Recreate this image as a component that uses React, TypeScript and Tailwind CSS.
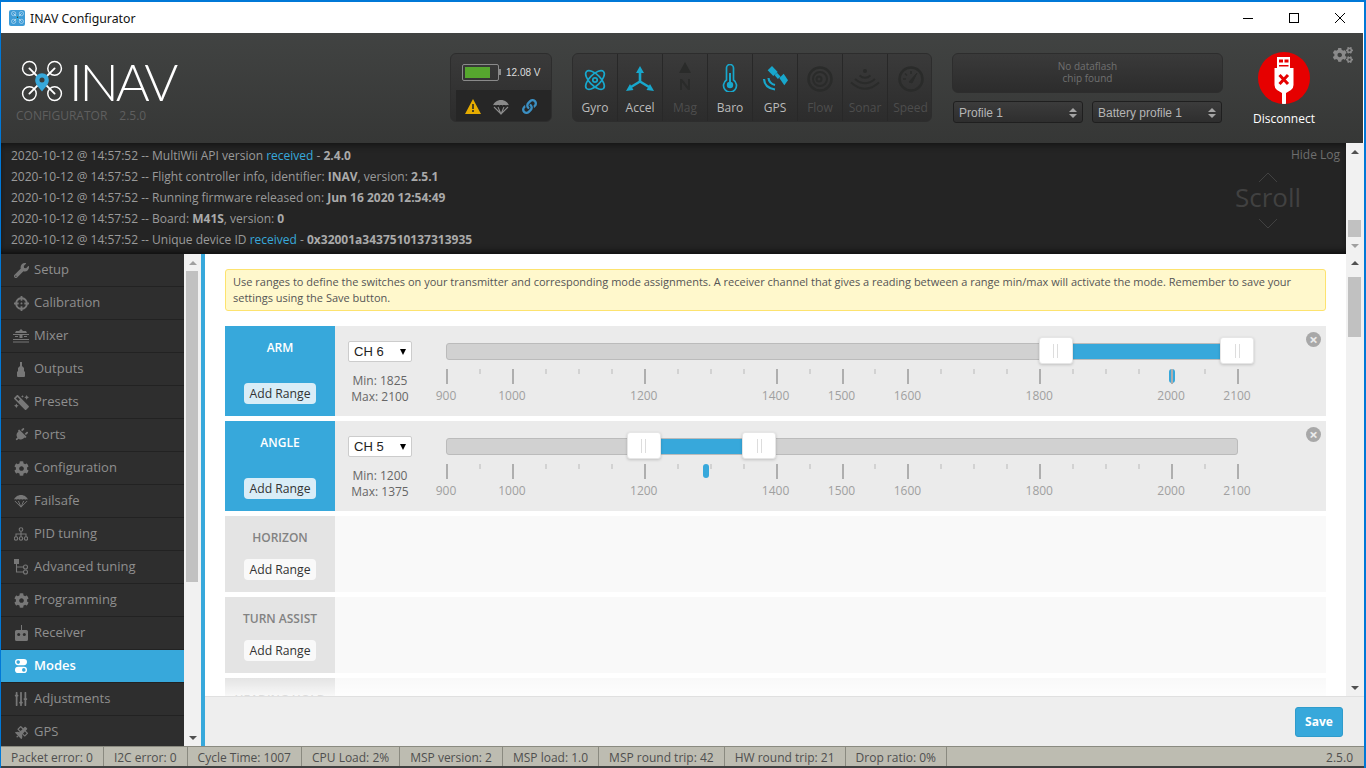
import {
  FaCog,
  FaCogs,
  FaCrosshairs,
  FaLink,
  FaMagic,
  FaPlug,
  FaSatellite,
  FaSlidersH,
  FaWrench,
} from "react-icons/fa";
import type { ReactNode } from "react";

const SCALE_BIG = [900, 1000, 1200, 1400, 1500, 1600, 1800, 2000, 2100];
const SCALE_SMALL = [950, 1050, 1100, 1150, 1250, 1300, 1350, 1450, 1550, 1650, 1700, 1750, 1850, 1900, 1950, 2050];
const pos = (v: number) => ((v - 900) / 1200) * 791;

function Drone({ size = 60 }: { size?: number }) {
  return (
    <svg width={size} height={size} viewBox="0 0 40 40" fill="none">
      <g stroke="#fff" strokeWidth="1.4">
        <circle cx="8" cy="8" r="6.5" />
        <circle cx="32" cy="8" r="6.5" />
        <circle cx="8" cy="32" r="6.5" />
        <circle cx="32" cy="32" r="6.5" />
        <path d="M8 8l10 10M32 8L22 18M8 32l10-10M32 32L22 22" strokeWidth="1.8" strokeLinecap="round" />
      </g>
      <path d="M20 30c-3-4-6.500-7-6.500-11a6.500 6.500 0 0 1 13 0c0 4-3.500 7-6.500 11z" fill="#37a8db" />
      <circle cx="20" cy="19" r="2.400" fill="#3c3d3c" />
    </svg>
  );
}

function GyroIcon() {
  return (
    <svg width="24" height="24" viewBox="0 0 24 24" fill="none" stroke="#18a7cc" strokeWidth="1.700">
      <ellipse cx="12" cy="12" rx="12" ry="5.500" transform="rotate(45 12 12)" />
      <ellipse cx="12" cy="12" rx="12" ry="5.500" transform="rotate(-45 12 12)" />
      <circle cx="12" cy="12" r="2.200" />
    </svg>
  );
}

function AccelIcon() {
  return (
    <svg width="28" height="26" viewBox="0 0 28 26" fill="#18a7cc">
      <path d="M14 0l4 7h-8zM0 25l4-7 3.500 6z" />
      <path d="M28 25l-4-7-3.500 6z" />
      <path d="M14 5v11M14 15.500L5 21M14 15.500L23 21" stroke="#18a7cc" strokeWidth="2.600" fill="none" />
    </svg>
  );
}

function MagIcon() {
  return (
    <svg width="14" height="30" viewBox="0 0 14 30" fill="#2a2b2a">
      <path d="M7 0l6 11H1z" />
      <path d="M2 28V17h2l6 7.500V17h2v11h-2l-6-7.500V28z" />
    </svg>
  );
}

function BaroIcon() {
  return (
    <svg width="16" height="28" viewBox="0 0 16 28" fill="none" stroke="#18a7cc" strokeWidth="1.700">
      <path d="M4.500 16V4a3.500 3.500 0 0 1 7 0v12a6.500 6.500 0 1 1-7 0z" />
      <circle cx="8" cy="21" r="3.200" fill="#18a7cc" stroke="none" />
      <path d="M8 21V9" strokeWidth="2" />
    </svg>
  );
}

function GpsIcon() {
  return (
    <svg width="26" height="26" viewBox="0 0 26 26" fill="#18a7cc">
      <path d="M5.700 4.300L10 0l5.700 6-4.400 4z" />
      <path d="M12.500 9l2.500-2.300 3.500 3.800-2.600 2.500z" />
      <path d="M17.300 12l4.400-4.300 4.300 6.600-3.700 5z" />
      <path d="M6.500 12q.5 5.500 6.500 7M2 13q.5 9 11 10.500" fill="none" stroke="#18a7cc" strokeWidth="2.200" />
    </svg>
  );
}

function FlowIcon() {
  return (
    <svg width="26" height="26" viewBox="0 0 26 26" fill="none" stroke="#2a2b2a">
      <circle cx="13" cy="13" r="11.500" strokeWidth="2.500" />
      <circle cx="13" cy="13" r="7" strokeWidth="2" />
      <circle cx="12" cy="13" r="2.500" strokeWidth="2" />
    </svg>
  );
}

function SonarIcon() {
  return (
    <svg width="30" height="24" viewBox="0 0 30 24" fill="none" stroke="#2a2b2a" strokeWidth="2">
      <circle cx="15" cy="3" r="2" fill="#2a2b2a" stroke="none" />
      <path d="M9.500 7.500q5.500 4.500 11 0M5 11q10 8.500 20 0M1 14.500q14 12.500 28 0" />
    </svg>
  );
}

function SpeedIcon() {
  return (
    <svg width="26" height="26" viewBox="0 0 26 26" fill="none" stroke="#2a2b2a">
      <circle cx="13" cy="13" r="11.500" strokeWidth="2.500" />
      <path d="M11 16l8-9-5 10z" fill="#2a2b2a" strokeWidth="1" />
      <path d="M5 13h3M13 5v3M7 7.500l2 2" strokeWidth="1.500" />
    </svg>
  );
}

function ParachuteIcon({ color = "#8a8a8a", size = 16 }: { color?: string; size?: number }) {
  return (
    <svg width={size} height={size} viewBox="0 0 16 16" fill={color}>
      <path d="M8 1C4 1 .8 3.500 0 6.500c1-.6 2-.6 3 0 1-.6 2.500-.6 3.500 0 1-.6 2-.6 3 0 1-.6 2.500-.6 3.500 0 1-.6 2-.6 3 0C15.200 3.500 12 1 8 1z" />
      <path d="M1 8l7 7 7-7M5 8l3 7 3-7" fill="none" stroke={color} strokeWidth="1.100" />
    </svg>
  );
}

function MixerIcon() {
  return (
    <svg width="16" height="14" viewBox="0 0 16 14" fill="#777">
      <path d="M8 0l2 2h3l1 2H2l1-2h3zM0 5h16v1H0zM2 7h3v1H2zM11 7h3v1h-3zM6.500 6h3v3h-3z" />
      <path d="M0 10h16v1H0zM0 12.500h16v1H0z" />
    </svg>
  );
}

function OutputsIcon() {
  return (
    <svg width="10" height="15" viewBox="0 0 10 15" fill="#777">
      <path d="M4 0h2v4l2 2v3l1 1v4q0 1-1 1H2q-1 0-1-1v-4l1-1V6l2-2z" />
    </svg>
  );
}

function ReceiverIcon() {
  return (
    <svg width="13" height="16" viewBox="0 0 13 16" fill="#777">
      <path d="M6 0h1v5h4.500q1.500 0 1.500 1.500V14.500q0 1.500-1.500 1.500h-10Q0 16 0 14.500V6.500Q0 5 1.500 5H6z" />
      <circle cx="3.700" cy="9.500" r="1.500" fill="#2e2e2e" />
      <circle cx="9.300" cy="9.500" r="1.500" fill="#2e2e2e" />
    </svg>
  );
}

function ModesIcon() {
  return (
    <svg width="12" height="14" viewBox="0 0 12 14" fill="#fff">
      <rect width="12" height="6.200" rx="3.100" />
      <rect y="7.800" width="12" height="6.200" rx="3.100" />
      <circle cx="3.200" cy="3.100" r="1.800" fill="#37a8db" />
      <circle cx="8.800" cy="10.900" r="1.800" fill="#37a8db" />
    </svg>
  );
}

function PidIcon() {
  return (
    <svg width="14" height="14" viewBox="0 0 14 14" fill="none" stroke="#777" strokeWidth="1.100">
      <circle cx="7" cy="2.500" r="1.800" />
      <circle cx="2" cy="11.500" r="1.700" />
      <circle cx="7" cy="11.500" r="1.700" />
      <circle cx="12" cy="11.500" r="1.700" />
      <path d="M7 4.300v5.500M2 9.800V7h10v2.800" />
    </svg>
  );
}

function AdvancedIcon() {
  return (
    <svg width="15" height="16" viewBox="0 0 15 16" fill="none" stroke="#777" strokeWidth="1.100">
      <rect x="0" y="0" width="5" height="5" fill="#777" stroke="none" />
      <path d="M2.500 5v8h7M2.500 8h7" />
      <circle cx="11.500" cy="8" r="2" />
      <circle cx="11.500" cy="13" r="2" />
    </svg>
  );
}

const NAV: { label: string; icon: ReactNode }[] = [
  { label: "Setup", icon: <FaWrench size={15} /> },
  { label: "Calibration", icon: <FaCrosshairs size={15} /> },
  { label: "Mixer", icon: <MixerIcon /> },
  { label: "Outputs", icon: <OutputsIcon /> },
  { label: "Presets", icon: <FaMagic size={15} className="-scale-x-100" /> },
  { label: "Ports", icon: <FaPlug size={14} className="rotate-45" /> },
  { label: "Configuration", icon: <FaCog size={15} /> },
  { label: "Failsafe", icon: <ParachuteIcon color="#777" size={14} /> },
  { label: "PID tuning", icon: <PidIcon /> },
  { label: "Advanced tuning", icon: <AdvancedIcon /> },
  { label: "Programming", icon: <FaCog size={15} /> },
  { label: "Receiver", icon: <ReceiverIcon /> },
  { label: "Modes", icon: <ModesIcon /> },
  { label: "Adjustments", icon: <FaSlidersH size={14} className="rotate-90" /> },
  { label: "GPS", icon: <FaSatellite size={13} /> },
];

const SENSORS: { label: string; icon: ReactNode; on: boolean }[] = [
  { label: "Gyro", icon: <GyroIcon />, on: true },
  { label: "Accel", icon: <AccelIcon />, on: true },
  { label: "Mag", icon: <MagIcon />, on: false },
  { label: "Baro", icon: <BaroIcon />, on: true },
  { label: "GPS", icon: <GpsIcon />, on: true },
  { label: "Flow", icon: <FlowIcon />, on: false },
  { label: "Sonar", icon: <SonarIcon />, on: false },
  { label: "Speed", icon: <SpeedIcon />, on: false },
];

const STATUS = [
  "Packet error: 0",
  "I2C error: 0",
  "Cycle Time: 1007",
  "CPU Load: 2%",
  "MSP version: 2",
  "MSP load: 1.0",
  "MSP round trip: 42",
  "HW round trip: 21",
  "Drop ratio: 0%",
];

function Handle({ value }: { value: number }) {
  return (
    <div
      className="absolute top-[-7px] ml-[-18px] flex h-[27px] w-[34px] items-center justify-center gap-[3px] rounded-[3px] border border-[#e6e6e6] bg-white shadow-[0_1px_3px_rgba(0,0,0,0.18)]"
      style={{ left: pos(value) }}
    >
      <span className="h-[14px] w-px bg-[#ddd]" />
      <span className="h-[14px] w-px bg-[#ddd]" />
    </div>
  );
}

function RangeRow({
  name,
  channel,
  min,
  max,
  marker,
}: {
  name: string;
  channel: string;
  min: number;
  max: number;
  marker: number;
}) {
  return (
    <div className="flex h-[90px] bg-[#ebebeb]">
      <div className="flex w-[110px] flex-col items-center bg-[#37a8db] pt-[12px]">
        <div className="text-[12px] leading-[20px] font-semibold text-white">{name}</div>
        <AddRange className="mt-[25px] bg-[#d9edf7]" />
      </div>
      <div className="w-[111px] pt-[15px] pl-[13px] text-[12px] text-[#666]">
        <div className="flex h-[21px] w-[64px] items-center justify-between rounded-[2px] border border-[#ccc] bg-white pr-[5px] pl-[5px] font-['Liberation_Sans',sans-serif] text-[13px] text-[#222]">
          <span>{channel}</span>
          <span className="border-x-[3.500px] border-t-[6px] border-x-transparent border-t-black" />
        </div>
        <div className="mt-[11px] w-[64px] text-center leading-[16px]">
          <div>Min: {min}</div>
          <div>Max: {max}</div>
        </div>
      </div>
      <div className="relative flex-1">
        <div className="absolute top-[17px] left-0 h-[17px] w-[792px] rounded-[3px] border border-[#bbb] bg-[#d1d1d1]">
          <div
            className="absolute top-0 ml-[-1px] h-full bg-[#37a8db]"
            style={{ left: pos(min), width: pos(max) - pos(min) }}
          />
          <Handle value={min} />
          <Handle value={max} />
        </div>
        {SCALE_SMALL.map((v) => (
          <span
            key={v}
            className="absolute top-[43px] h-[5px] w-[2px] bg-[#d2d2d2]"
            style={{ left: pos(v) }}
          />
        ))}
        <span
          className="absolute top-[43px] h-[14px] w-[6px] rounded-[3px] bg-[#37a8db]"
          style={{ left: pos(marker) - 2 }}
        />
        {SCALE_BIG.map((v) => (
          <span key={v}>
            <span
              className="absolute top-[43px] h-[15px] w-[2px] bg-[#aeaeae]"
              style={{ left: pos(v) }}
            />
            <span
              className="absolute top-[62px] w-[40px] text-center text-[12px] leading-[16px] text-[#a0a0a0]"
              style={{ left: pos(v) - 20 }}
            >
              {v}
            </span>
          </span>
        ))}
        <button className="absolute top-[6px] right-[5px] flex h-[15px] w-[15px] items-center justify-center rounded-full bg-[#a8a8a8] text-[15px] leading-none font-bold text-[#ebebeb]">
          ×
        </button>
      </div>
    </div>
  );
}

function AddRange({ className }: { className: string }) {
  return (
    <button
      className={`h-[21px] w-[72px] rounded-[4px] text-[12.200px] leading-[21px] text-[#333] ${className}`}
    >
      Add Range
    </button>
  );
}

function EmptyRow({ name, children }: { name: string; children?: ReactNode }) {
  return (
    <div className="flex h-[76px] shrink-0 bg-[#f9f9f9]">
      <div className="flex w-[110px] flex-col items-center bg-[#e4e4e4] pt-[12px]">
        <div className="text-[12px] leading-[20px] font-semibold text-[#828282]">{name}</div>
        {children}
      </div>
    </div>
  );
}

function Scrollbar({
  thumbTop,
  thumbH,
  width = "w-[17px]",
  up = "text-[#505050]",
  down = "text-[#505050]",
}: {
  thumbTop: string;
  thumbH: string;
  width?: string;
  up?: string;
  down?: string;
}) {
  return (
    <div className={`relative shrink-0 bg-[#f1f1f1] ${width}`}>
      <div className={`flex h-[17px] items-center justify-center ${up}`}>
        <span className="border-x-[4px] border-b-[4px] border-x-transparent border-b-current" />
      </div>
      <div className={`absolute right-[3px] left-[2px] bg-[#c1c1c1] ${thumbTop} ${thumbH}`} />
      <div className={`absolute right-0 bottom-0 left-0 flex h-[17px] items-center justify-center ${down}`}>
        <span className="border-x-[4px] border-t-[4px] border-x-transparent border-t-current" />
      </div>
    </div>
  );
}

export default function App() {
  return (
    <div className="flex h-[768px] w-[1366px] flex-col overflow-hidden border-t-2 border-r-2 border-l border-[#0078d7] bg-white font-['Open_Sans',sans-serif] text-[12px]">
      <div className="flex h-[31px] shrink-0 items-center bg-white font-['Noto_Sans',sans-serif]">
        <div className="ml-[8px] flex h-[16px] w-[16px] items-center justify-center rounded-[2px] bg-[#3d9bd6]">
          <Drone size={13} />
        </div>
        <span className="ml-[5px] pt-[3px] text-[12.300px] text-[#111]">INAV Configurator</span>
        <div className="mr-[1px] ml-auto flex items-center text-black">
          <svg width="46" height="12" viewBox="0 0 46 12" stroke="#000" strokeWidth="1">
            <path d="M18 6.500h10" />
          </svg>
          <svg width="46" height="12" viewBox="0 0 46 12" fill="none" stroke="#000" strokeWidth="1">
            <rect x="18.500" y="1.500" width="9" height="9" />
          </svg>
          <svg width="46" height="12" viewBox="0 0 46 12" fill="none" stroke="#000" strokeWidth="1">
            <path d="M18 1l10 10M28 1L18 11" />
          </svg>
        </div>
      </div>

      <div className="relative mr-[1px] flex h-[110px] shrink-0 bg-gradient-to-b from-[#414342] to-[#363736]">
        <div className="w-[449px] pt-[25px] pl-[20px]">
          <div className="flex items-center">
            <Drone size={42} />
            <span className="ml-[6px] font-['Lato',sans-serif] text-[52px] leading-[46px] font-light tracking-[-3px] text-white">
              INAV
            </span>
          </div>
          <div className="mt-[4px] -ml-[5px] text-[12px] leading-[16px] text-[#5f5f5f]">
            CONFIGURATOR<span className="ml-[12px]">2.5.0</span>
          </div>
        </div>

        <div className="mt-[20px] h-[69px] w-[102px] overflow-hidden rounded-[6px] border border-[#2d2d2d] bg-gradient-to-b from-[#3a3a3a] to-[#2c2c2c]">
          <div className="flex h-[36px] items-center pl-[11px]">
            <div className="flex h-[17px] w-[37px] items-center rounded-[2px] border border-[#8a8a8a] px-[2px]">
              <div className="h-[11px] w-[25px] bg-[#56a72e]" />
            </div>
            <span className="h-[6px] w-[2px] bg-[#8a8a8a]" />
            <span className="ml-[5px] font-['Liberation_Sans',sans-serif] text-[10px] text-[#ddd]">12.08 V</span>
          </div>
          <div className="ml-[5px] flex h-[33px] items-center bg-[#262626] pl-[9px]">
            <svg width="16" height="15" viewBox="0 0 16 15">
              <path d="M8 0l8 15H0z" fill="#e6ac00" />
              <path d="M7.200 5h1.600v5H7.200zM7.200 11h1.600v2H7.200z" fill="#262626" />
            </svg>
            <span className="ml-[12px]"><ParachuteIcon /></span>
            <span className="ml-[13px]"><FaLink size={15} color="#3b8fc2" /></span>
          </div>
        </div>

        <div className="mt-[20px] ml-[20px] flex h-[69px] w-[360px] overflow-hidden rounded-[6px] border border-[#2d2d2d] bg-gradient-to-b from-[#3a3a3a] to-[#2c2c2c]">
          {SENSORS.map((s) => (
            <div
              key={s.label}
              className="flex w-[45px] shrink-0 flex-col items-center border-r border-[#282828] last:border-r-0"
            >
              <div className="flex h-[38px] items-end justify-center">{s.icon}</div>
              <div
                className={`mt-[5px] text-[12px] leading-[22px] ${s.on ? "text-[#bbb]" : "text-[#4d4d4d]"}`}
              >
                {s.label}
              </div>
            </div>
          ))}
        </div>

        <div className="mt-[20px] ml-[20px] w-[271px]">
          <div className="flex h-[40px] flex-col items-center justify-center rounded-[6px] border border-[#2d2d2d] bg-gradient-to-b from-[#3a3a3a] to-[#2c2c2c] pb-[2px] text-[10px] leading-[12px] text-[#707070]">
            <div>No dataflash</div>
            <div>chip found</div>
          </div>
          <div className="mt-[8px] flex justify-between px-[1px]">
            {["Profile 1", "Battery profile 1"].map((p) => (
              <div
                key={p}
                className="flex h-[22px] w-[130px] items-center justify-between rounded-[3px] border border-[#1f1f1f] bg-gradient-to-b from-[#3c3c3c] to-[#2e2e2e] pt-[1px] pr-[5px] pl-[5px] font-['Liberation_Sans',sans-serif] text-[12px] text-[#b5b5b5]"
              >
                {p}
                <span className="flex flex-col gap-[2px] text-[#a5a5a5]">
                  <span className="border-x-[4px] border-b-[4px] border-x-transparent border-b-current" />
                  <span className="border-x-[4px] border-t-[4px] border-x-transparent border-t-current" />
                </span>
              </div>
            ))}
          </div>
        </div>

        <div className="ml-[20px] flex w-[82px] flex-col items-center pt-[19px]">
          <div className="flex h-[52px] w-[52px] items-center justify-center overflow-hidden rounded-full bg-[#e60000]">
            <svg width="20" height="52" viewBox="0 0 20 52" fill="#fff">
              <path d="M3 5h13v11h3.500v17q0 3-2.500 5l-5 3v11H8V41l-5-3q-2.500-2-2.500-5V16H3z" />
              <path d="M5 7.500h4v3H5zM10.500 7.500h4v3h-4z" fill="#e60000" />
              <path d="M5 13h9.500v1.500H5z" fill="#e60000" />
              <path d="M5.500 23l8.500 9M14 23l-8.500 9" stroke="#e60000" strokeWidth="3" />
            </svg>
          </div>
          <div className="mt-[5px] text-[12px] leading-[20px] text-white">Disconnect</div>
        </div>

        <div className="absolute top-[12px] right-[10px] text-[#8a8a8a]">
          <FaCogs size={20} />
        </div>
      </div>

      <div className="flex h-[111px] shrink-0">
        <div className="relative flex-1 bg-[#242424] pt-[2px] pl-[10px] text-[12px] leading-[21px] text-[#9a9a9a] shadow-[inset_0_-6px_6px_-4px_#0c0c0c,inset_0_6px_6px_-4px_#141414]">
          <div>2020-10-12 @ 14:57:52 -- MultiWii API version <span className="text-[#37a8db]">received</span> - <b className="text-[#aaa]">2.4.0</b></div>
          <div>2020-10-12 @ 14:57:52 -- Flight controller info, identifier: <b className="text-[#aaa]">INAV</b>, version: <b className="text-[#aaa]">2.5.1</b></div>
          <div>2020-10-12 @ 14:57:52 -- Running firmware released on: <b className="text-[#aaa]">Jun 16 2020 12:54:49</b></div>
          <div>2020-10-12 @ 14:57:52 -- Board: <b className="text-[#aaa]">M41S</b>, version: <b className="text-[#aaa]">0</b></div>
          <div>2020-10-12 @ 14:57:52 -- Unique device ID <span className="text-[#37a8db]">received</span> - <b className="text-[#aaa]">0x32001a3437510137313935</b></div>
          <div className="absolute top-[1px] right-[6px] text-[#6e6e6e]">Hide Log</div>
          <div className="absolute top-[29px] right-[43px] flex w-[70px] flex-col items-center text-[#414141]">
            <svg width="20" height="11" viewBox="0 0 20 11" fill="none" stroke="#414141"><path d="M1 10l9-9 9 9" /></svg>
            <div className="text-[26px] leading-[28px]">Scroll</div>
            <svg width="20" height="11" viewBox="0 0 20 11" fill="none" stroke="#414141" className="mt-[7px]"><path d="M1 1l9 9 9-9" /></svg>
          </div>
        </div>
        <Scrollbar thumbTop="top-[77px]" thumbH="h-[17px]" width="w-[18px]" down="text-[#a0a0a0]" />
      </div>

      <div className="flex min-h-0 flex-1">
        <div className="flex w-[183px] shrink-0 flex-col overflow-hidden bg-[#2e2e2e]">
          {NAV.map((n) => (
            <div
              key={n.label}
              className={`flex h-[33px] shrink-0 items-center border-b border-[#222] text-[13px] ${
                n.label === "Modes" ? "bg-[#37a8db] font-semibold text-white" : "text-[#8f8f8f]"
              }`}
            >
              <span className="flex w-[33px] shrink-0 justify-center pl-[7px] text-[#777]">{n.icon}</span>
              {n.label}
            </div>
          ))}
        </div>
        <Scrollbar thumbTop="top-[17px]" thumbH="h-[311px]" up="text-[#a0a0a0]" />
        <div className="w-[4px] shrink-0 bg-[#37a8db]" />

        <div className="flex min-w-0 flex-1 flex-col">
          <div className="flex min-h-0 flex-1">
            <div className="relative flex-1 overflow-hidden px-[20px] pt-[15px]">
              <div className="rounded-[3px] border border-[#fde36f] bg-[#fff8cc] px-[7px] py-[4px] text-[11px] leading-[16px] text-[#555]">
                Use ranges to define the switches on your transmitter and corresponding mode assignments. A receiver channel that gives a reading between a range min/max will activate the mode. Remember to save your settings using the Save button.
              </div>
              <div className="mt-[15px] flex flex-col gap-[5px]">
                <RangeRow name="ARM" channel="CH 6" min={1825} max={2100} marker={2000} />
                <RangeRow name="ANGLE" channel="CH 5" min={1200} max={1375} marker={1293} />
                <EmptyRow name="HORIZON">
                  <AddRange className="mt-[11px] bg-[#f9f9f9]" />
                </EmptyRow>
                <EmptyRow name="TURN ASSIST">
                  <AddRange className="mt-[11px] bg-[#f9f9f9]" />
                </EmptyRow>
                <EmptyRow name="HEADING HOLD" />
              </div>
              <div className="absolute right-0 bottom-0 left-0 h-[18px] bg-gradient-to-b from-transparent to-white/75" />
            </div>
            <Scrollbar thumbTop="top-[23px]" thumbH="h-[60px]" width="w-[18px]" />
          </div>
          <div className="flex h-[50px] shrink-0 items-center justify-end border-t border-[#e0e0e0] bg-[#eeeeee] pr-[21px]">
            <button className="h-[30px] w-[48px] rounded-[3px] border border-[#2f9bcb] bg-[#37a8db] text-[12px] font-bold text-white">
              Save
            </button>
          </div>
        </div>
      </div>

      <div className="flex h-[22px] shrink-0 items-start border-t border-[#8a8a80] bg-[#bdbcb1] text-[12px] leading-[21px] text-[#4f4f4f] shadow-[inset_0_-2px_0_#404040]">
        {STATUS.map((s) => (
          <div key={s} className="h-[19px] border-r border-[#8a8a80] px-[10px]">
            {s}
          </div>
        ))}
        <div className="ml-auto pr-[11px]">2.5.0</div>
      </div>
    </div>
  );
}
